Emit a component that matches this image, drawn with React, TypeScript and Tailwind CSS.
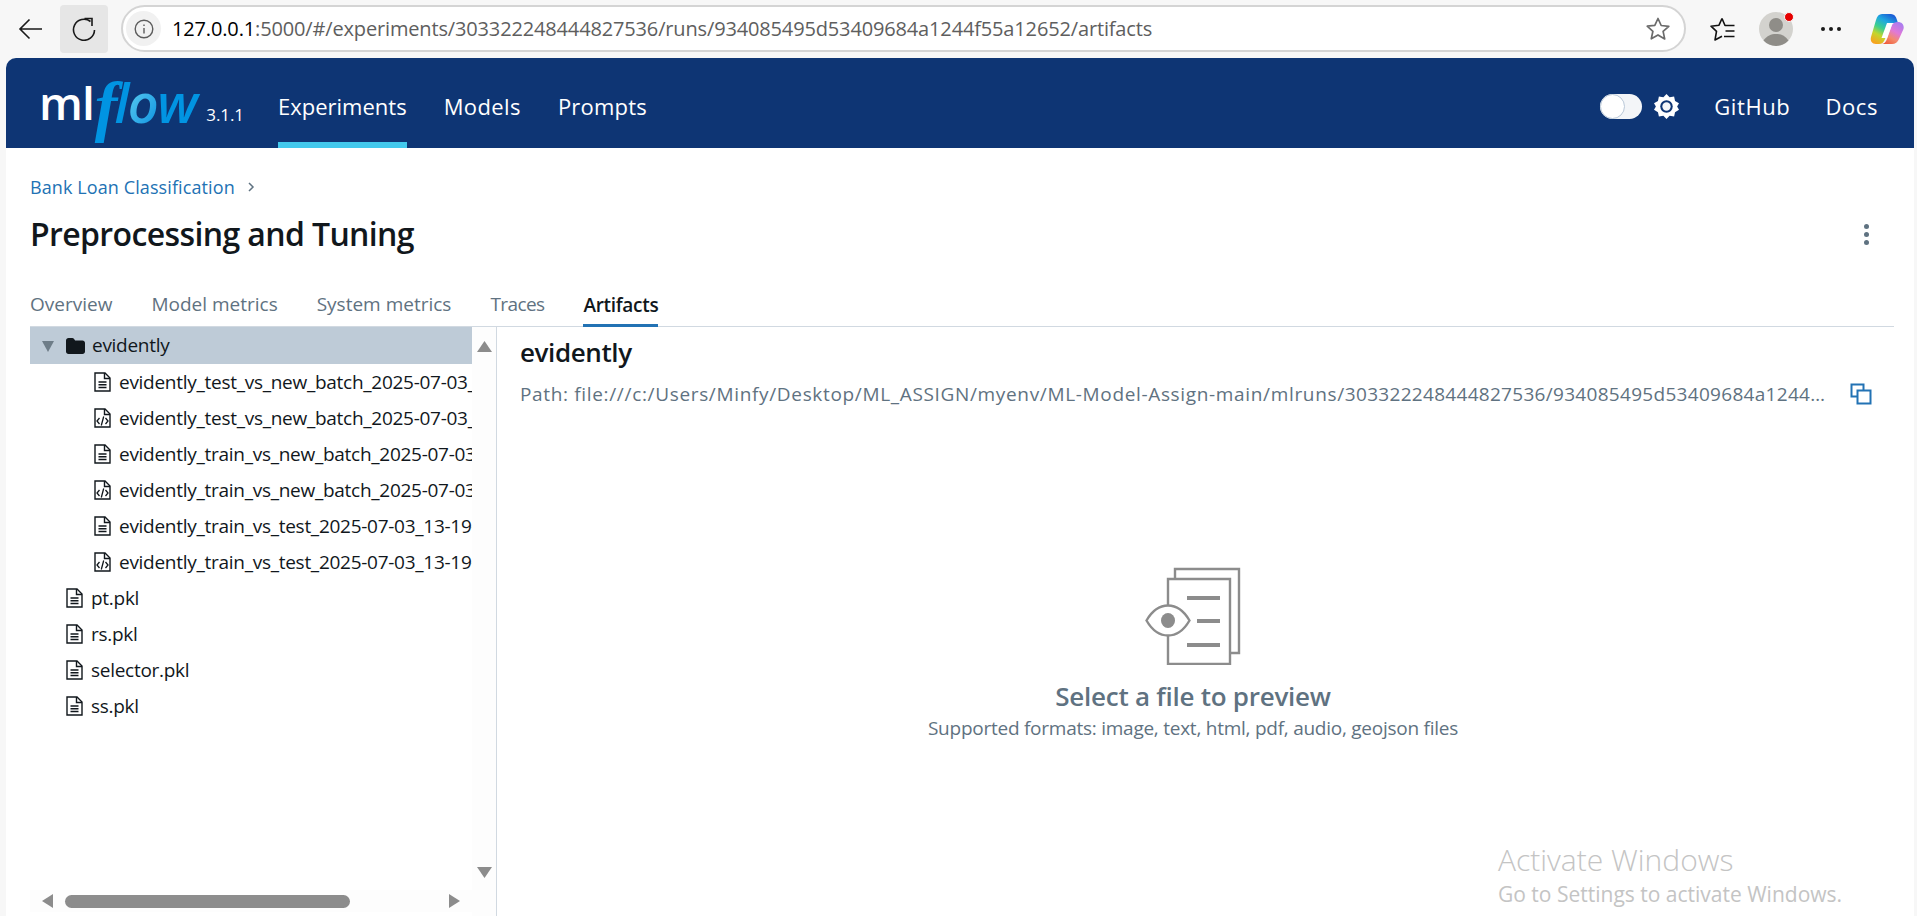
import React from "react";

const sans = "[font-family:'Open_Sans','Noto_Sans',sans-serif]";

function Back() {
  return (
    <svg width="24" height="22" viewBox="0 0 24 22" fill="none" stroke="#1a1a1a" strokeWidth="1.600">
      <path d="M24 11H2M11.500 1.500 2 11l9.500 9.500" />
    </svg>
  );
}
function Reload() {
  return (
    <svg width="26" height="24" viewBox="0 0 26 24" fill="none" stroke="#1a1a1a" strokeWidth="1.600">
      <path d="M19.500 4.500A10.500 10.500 0 1 0 23.500 13" />
      <path d="M13.500 1.500h7.500v7.500" />
    </svg>
  );
}
function Info() {
  return (
    <svg width="20" height="20" viewBox="0 0 20 20" fill="none" stroke="#5c5c5c" strokeWidth="1.400">
      <circle cx="10" cy="10" r="8.800" />
      <path d="M10 9v5.500M10 5.500v1.600" />
    </svg>
  );
}
function Star() {
  return (
    <svg width="26" height="26" viewBox="0 0 26 26" fill="none" stroke="#6b6b6b" strokeWidth="1.700" strokeLinejoin="round">
      <path d="M13 2.500l3.200 7 7.600.8-5.700 5.100 1.600 7.500L13 18.900l-6.700 3.900 1.600-7.500-5.700-5.100 7.600-.8z" />
    </svg>
  );
}
function FavList() {
  return (
    <svg width="25" height="26" viewBox="0 0 25 26" fill="none" stroke="#111" strokeWidth="1.600" strokeLinejoin="round">
      <path d="M12 2.500 15 9.500H24.500M12 2.500 9 9.200 1 10.200l5.500 5.200-1.500 8.600 7-3.800" />
      <path d="M15.500 15h9M14 20.500h10.500" />
    </svg>
  );
}
function Avatar() {
  return (
    <div className="relative w-[34px] h-[34px]">
      <svg width="34" height="34" viewBox="0 0 34 34">
        <circle cx="17" cy="17" r="17" fill="#d3d2ce" />
        <circle cx="17" cy="13" r="7" fill="#8f8d88" />
        <path d="M4.500 28.500C8 23.500 12 22 17 22s9 1.500 12.500 6.500A17 17 0 0 1 4.500 28.500z" fill="#8f8d88" />
      </svg>
      <span className="absolute right-[-1px] top-[0px] w-[10px] h-[10px] rounded-full bg-[#e60000] border border-[#f7f7f7]" />
    </div>
  );
}
function Copilot() {
  return (
    <svg width="34" height="32" viewBox="0 0 34 32">
      <defs>
        <linearGradient id="cpa" x1="0.7" y1="0" x2="0.2" y2="1">
          <stop offset="0" stopColor="#1c5fd6" />
          <stop offset="0.25" stopColor="#1fa8e0" />
          <stop offset="0.5" stopColor="#3ccf8e" />
          <stop offset="0.72" stopColor="#c4d62c" />
          <stop offset="1" stopColor="#f9a11f" />
        </linearGradient>
        <linearGradient id="cpc" x1="0.8" y1="0" x2="0.2" y2="1">
          <stop offset="0" stopColor="#a77df0" />
          <stop offset="0.4" stopColor="#e079d8" />
          <stop offset="0.7" stopColor="#f48a6b" />
          <stop offset="1" stopColor="#ef5a3c" />
        </linearGradient>
      </defs>
      <path d="M12 1h9c3 0 5 2 6 6l1 3h-8l-5 16c-1 3-3 5-6 5H6c-4 0-6-3-5-7L6 7c1-4 3-6 6-6z" fill="url(#cpa)" />
      <path d="M28 9c4 0 6.500 3 5.500 7L29 26c-1 3-4 5-7 5H11c3 0 5-2 6-5l5-14c1-2 3-3 6-3z" fill="url(#cpc)" />
      <path d="M17 10h5.500l-5.500 15h-5.500z" fill="#fff" />
    </svg>
  );
}
function Sun() {
  return (
    <svg width="25" height="25" viewBox="0 0 24 24">
      <path
        fill="#fff"
        d="M12 0l3 3.200 4.300-.9.900 4.300 3.800 2.200-1.800 3.200 1.800 3.200-3.800 2.200-.9 4.300-4.300-.9L12 24l-3-3.200-4.300.9-.9-4.300L0 15.200l1.800-3.200L0 8.800l3.800-2.200.9-4.300 4.300.9z"
      />
      <circle cx="12" cy="12" r="6" fill="#0e3574" />
      <circle cx="12" cy="12" r="4" fill="#f4f6f9" />
    </svg>
  );
}
function FileText() {
  return (
    <svg width="17" height="20" viewBox="0 0 17 20" fill="none" stroke="#11171c" strokeWidth="1.400" className="shrink-0">
      <path d="M1 1h10l5 5v13H1z" />
      <path d="M10.500 1v5.500H16" />
      <path d="M4.500 10h8M4.500 12.800h8M4.500 15.600h8" strokeWidth="1.500" />
    </svg>
  );
}
function FileCode() {
  return (
    <svg width="17" height="20" viewBox="0 0 17 20" fill="none" stroke="#11171c" strokeWidth="1.400" className="shrink-0">
      <path d="M1 1h10l5 5v13H1z" />
      <path d="M10.500 1v5.500H16" />
      <path d="M5.500 10L3 13l2.500 3M11.500 10l2.500 3-2.500 3M9.700 8.500l-2.400 9" strokeWidth="1.300" />
    </svg>
  );
}
function Folder() {
  return (
    <svg width="19" height="16" viewBox="0 0 19 16" className="shrink-0">
      <path
        fill="#11171c"
        d="M0 2.500C0 1.100 1.100 0 2.500 0h3.700c.8 0 1.400.4 1.900 1l1 1.500h7.400c1.400 0 2.500 1.100 2.500 2.500v8.500c0 1.400-1.100 2.500-2.500 2.500h-14C1.100 16 0 14.900 0 13.500z"
      />
    </svg>
  );
}
function Copy() {
  return (
    <svg width="22" height="22" viewBox="0 0 22 22" fill="none" stroke="#2272b4" strokeWidth="2">
      <path d="M13.500 7V1.500H1.500v12H7" />
      <rect x="7.500" y="7.500" width="13" height="13" />
    </svg>
  );
}
function PreviewIcon() {
  return (
    <svg width="96" height="98" viewBox="0 0 96 98" fill="none" stroke="#8c8c8c" strokeWidth="2.400">
      <path d="M30 11V2h64v84h-8" />
      <path d="M23 38V12h62v85H23V69" />
      <path d="M1.500 53.500C7 44 15 38.500 23 38.500s16 5.500 21.500 15C39 63 31 68.500 23 68.500S7 63 1.500 53.500z" />
      <ellipse cx="23" cy="53.500" rx="7" ry="7.500" fill="#8c8c8c" stroke="none" />
      <path d="M42 31h33M52 54h23M42 78h33" strokeWidth="4" />
    </svg>
  );
}

const children: [string, boolean][] = [
  ["evidently_test_vs_new_batch_2025-07-03_13-19-06.json", false],
  ["evidently_test_vs_new_batch_2025-07-03_13-19-06.html", true],
  ["evidently_train_vs_new_batch_2025-07-03_13-19-06.json", false],
  ["evidently_train_vs_new_batch_2025-07-03_13-19-06.html", true],
  ["evidently_train_vs_test_2025-07-03_13-19-06.json", false],
  ["evidently_train_vs_test_2025-07-03_13-19-06.html", true],
];
const topFiles = ["pt.pkl", "rs.pkl", "selector.pkl", "ss.pkl"];

export default function App() {
  return (
    <div className={`relative h-[916px] w-full overflow-hidden bg-[#f7f7f7] flex flex-col ${sans}`}>
      {/* browser toolbar */}
      <div className="h-[58px] shrink-0 flex items-start pt-[5px]">
        <div className="w-[60px] h-[48px] flex items-center pl-[18px] shrink-0">
          <Back />
        </div>
        <div className="w-[48px] h-[48px] rounded-[4px] bg-[#e6e6e6] flex items-center justify-center shrink-0">
          <Reload />
        </div>
        <div className="ml-[13px] w-[1565px] h-[47px] shrink-0 rounded-full border-2 border-[#d4d4d4] bg-white flex items-center pl-[3px] pr-[13px]">
          <div className="w-[35px] h-[35px] rounded-full bg-[#f1f1f1] flex items-center justify-center shrink-0">
            <Info />
          </div>
          <div className="ml-[11px] flex-1 text-[20px] tracking-[-0.15px] text-[#5e5e5e] whitespace-nowrap">
            <span className="text-black">127.0.0.1</span>:5000/#/experiments/303322248444827536/runs/934085495d53409684a1244f55a12652/artifacts
          </div>
          <Star />
        </div>
        <div className="flex-1 flex items-center h-[47px]">
          <div className="ml-[24px]"><FavList /></div>
          <div className="ml-[24px]"><Avatar /></div>
          <div className="ml-[28px] flex gap-[4px]">
            <span className="w-[4px] h-[4px] rounded-full bg-[#1a1a1a]" />
            <span className="w-[4px] h-[4px] rounded-full bg-[#1a1a1a]" />
            <span className="w-[4px] h-[4px] rounded-full bg-[#1a1a1a]" />
          </div>
          <div className="ml-[29px]"><Copilot /></div>
        </div>
      </div>

      <div className="ml-[6px] mr-[3px] flex-1 flex flex-col min-h-0">
        {/* mlflow header */}
        <header className="h-[90px] shrink-0 rounded-t-[10px] bg-[#0e3574] flex items-center pl-[33px] pr-[36px] text-white">
          <div className="w-[239px] flex items-end h-[60px] pb-[8px] shrink-0">
            <span className="text-[46px] leading-[46px] font-semibold tracking-[-1px]">ml</span>
            <span className="text-[68px] leading-[46px] italic font-bold text-[#0194e2] [font-family:'Liberation_Serif',serif] ml-[1px] mr-[-3px] translate-y-[4px]">f</span>
            <span className="text-[54px] leading-[46px] italic font-semibold tracking-[-1.5px] text-[#0194e2]">l</span>
            <span className="text-[54px] leading-[46px] italic font-semibold tracking-[-1.5px] text-transparent bg-clip-text bg-linear-to-br from-[#5fd3f0] to-[#0194e2]">o</span>
            <span className="text-[54px] leading-[46px] italic font-semibold tracking-[-1.5px] text-[#0194e2]">w</span>
            <span className="ml-[10px] text-[17px] leading-[20px] tracking-[-0.1px]">3.1.1</span>
          </div>
          <nav className="flex gap-[37px] h-full text-[22px]">
            <a className="h-full flex items-center border-b-[6px] border-[#43c9ed] pt-[12px]">Experiments</a>
            <a className="h-full flex items-center pt-[6px] tracking-[0.4px]">Models</a>
            <a className="h-full flex items-center pt-[6px] tracking-[0.2px]">Prompts</a>
          </nav>
          <div className="ml-auto flex items-center text-[22px] pt-[6px] tracking-[0.6px]">
            <div className="w-[42px] h-[25px] rounded-full bg-[#f3f5f8] relative">
              <span className="absolute left-0 top-0 w-[25px] h-[25px] rounded-full bg-white border border-[#b9c8d8]" />
            </div>
            <div className="ml-[12px] flex"><Sun /></div>
            <span className="ml-[35px]">GitHub</span>
            <span className="ml-[35px]">Docs</span>
          </div>
        </header>

        {/* page */}
        <main className="flex-1 min-h-0 bg-white pl-[24px] pr-[20px] flex flex-col">
          <div className="mt-[27px] h-[24px] flex items-center text-[18px] tracking-[0.1px] text-[#2272b4]">
            Bank Loan Classification
            <svg width="8" height="12" viewBox="0 0 8 12" fill="none" stroke="#5f7281" strokeWidth="1.500" className="ml-[12px]">
              <path d="M2 2l4 4-4 4" />
            </svg>
          </div>
          <div className="mt-[13px] h-[44px] flex items-center justify-between">
            <h1 className="text-[32px] font-semibold tracking-[-0.62px] text-[#11171c]">Preprocessing and Tuning</h1>
            <div className="flex flex-col gap-[3px] mr-[25px]">
              <span className="w-[5px] h-[5px] rounded-full bg-[#5f7281]" />
              <span className="w-[5px] h-[5px] rounded-full bg-[#5f7281]" />
              <span className="w-[5px] h-[5px] rounded-full bg-[#5f7281]" />
            </div>
          </div>
          <div className="mt-[27px] h-[44px] shrink-0 flex gap-[39px] border-b border-[#d1d9e1] text-[19px] font-medium text-[#5f7281]">
            <span className="flex items-center">Overview</span>
            <span className="flex items-center">Model metrics</span>
            <span className="flex items-center">System metrics</span>
            <span className="flex items-center tracking-[-0.6px]">Traces</span>
            <span className="flex items-center pt-[3px] text-[#11171c] border-b-[3px] border-[#2272b4] mb-[-1px] font-semibold tracking-[-0.3px]">Artifacts</span>
          </div>

          <div className="flex-1 min-h-0 flex">
            {/* tree */}
            <div className="w-[467px] shrink-0 border-r border-[#d1d9e1] flex">
              <div className="w-[442px] flex flex-col">
                <div className="flex-1 min-h-0 overflow-hidden text-[19px] tracking-[-0.28px] text-[#11171c]">
                  <div className="h-[37px] bg-[#becbd7] flex items-center pl-[12px]">
                    <svg width="12" height="12" viewBox="0 0 12 12" className="shrink-0">
                      <path d="M0 1h12L6 12z" fill="#6e7d88" />
                    </svg>
                    <span className="ml-[12px] flex"><Folder /></span>
                    <span className="ml-[7px]">evidently</span>
                  </div>
                  {children.map(([name, code]) => (
                    <div key={name} className="h-[36px] flex items-center pl-[64px] whitespace-nowrap">
                      {code ? <FileCode /> : <FileText />}
                      <span className="ml-[8px]">{name}</span>
                    </div>
                  ))}
                  {topFiles.map((name) => (
                    <div key={name} className="h-[36px] flex items-center pl-[36px] whitespace-nowrap">
                      <FileText />
                      <span className="ml-[8px]">{name}</span>
                    </div>
                  ))}
                </div>
                <div className="h-[22px] shrink-0 mb-[4px] bg-[#fdfdfd] flex items-center pl-[12px] pr-[12px]">
                  <svg width="11" height="14" viewBox="0 0 11 14"><path d="M11 0v14L0 7z" fill="#8c8c8c" /></svg>
                  <span className="ml-[12px] w-[285px] h-[13px] rounded-full bg-[#8c8c8c]" />
                  <svg width="11" height="14" viewBox="0 0 11 14" className="ml-auto"><path d="M0 0v14l11-7z" fill="#8c8c8c" /></svg>
                </div>
              </div>
              <div className="flex-1 bg-[#fdfdfd] flex flex-col items-center justify-between pt-[14px] pb-[38px]">
                <svg width="15" height="11" viewBox="0 0 15 11"><path d="M7.500 0L15 11H0z" fill="#8c8c8c" /></svg>
                <svg width="15" height="11" viewBox="0 0 15 11"><path d="M7.500 11L15 0H0z" fill="#8c8c8c" /></svg>
              </div>
            </div>

            {/* preview */}
            <div className="flex-1 min-w-0 flex flex-col pl-[23px]">
              <h2 className="mt-[7px] h-[36px] flex items-center text-[26px] font-semibold tracking-[-0.4px] text-[#11171c]">evidently</h2>
              <div className="mt-[8px] h-[32px] flex items-center text-[#5f7281] text-[19px]">
                <span className="truncate w-[1309px]">
                  <span className="tracking-[0.66px]">Path: file:///c:/Users/Minfy/Desktop/ML_ASSIGN/myenv/ML-Model-Assign-main/mlruns/</span>
                  <span className="tracking-[0.3px]">303322248444827536/934085495d53409684a1244f55a12652/artifacts/evidently</span>
                </span>
                <span className="ml-[21px] flex"><Copy /></span>
              </div>
              <div className="mt-[157px] flex flex-col items-center pr-[28px]">
                <PreviewIcon />
                <div className="mt-[14px] text-[26px] h-[34px] flex items-center font-semibold tracking-[-0.25px] text-[#5f7281]">Select a file to preview</div>
                <div className="mt-[2px] text-[19px] h-[26px] flex items-center tracking-[-0.25px] text-[#5f7281]">Supported formats: image, text, html, pdf, audio, geojson files</div>
              </div>
            </div>
          </div>
        </main>
      </div>

      {/* Windows watermark */}
      <div className="absolute left-[1498px] top-[840px] text-[#c4c4c4] pointer-events-none">
        <div className="text-[30px] leading-[40px] font-light">Activate Windows</div>
        <div className="text-[21px] leading-[28px]">Go to Settings to activate Windows.</div>
      </div>
    </div>
  );
}
